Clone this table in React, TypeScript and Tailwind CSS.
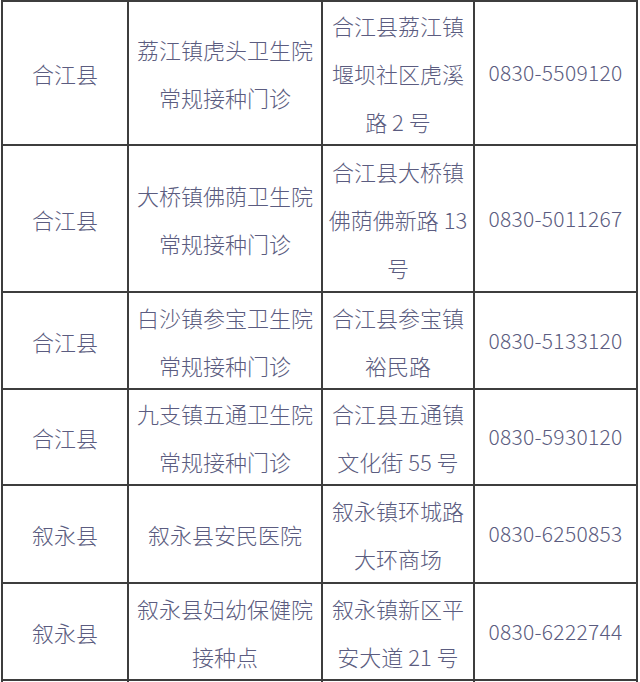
import React from "react";

type Row = { county: string; name: string[]; addr: string[]; phone: string };

const rows: Row[] = [
  { county: "合江县", name: ["荔江镇虎头卫生院", "常规接种门诊"], addr: ["合江县荔江镇", "堰坝社区虎溪", "路 2 号"], phone: "0830-5509120" },
  { county: "合江县", name: ["大桥镇佛荫卫生院", "常规接种门诊"], addr: ["合江县大桥镇", "佛荫佛新路 13", "号"], phone: "0830-5011267" },
  { county: "合江县", name: ["白沙镇参宝卫生院", "常规接种门诊"], addr: ["合江县参宝镇", "裕民路"], phone: "0830-5133120" },
  { county: "合江县", name: ["九支镇五通卫生院", "常规接种门诊"], addr: ["合江县五通镇", "文化街 55 号"], phone: "0830-5930120" },
  { county: "叙永县", name: ["叙永县安民医院"], addr: ["叙永镇环城路", "大环商场"], phone: "0830-6250853" },
  { county: "叙永县", name: ["叙永县妇幼保健院", "接种点"], addr: ["叙永镇新区平", "安大道 21 号"], phone: "0830-6222744" },
];

const font = { fontFamily: '"Noto Sans CJK SC", sans-serif' };

function Cell({ lines }: { lines: string[] }) {
  return (
    <div className="bg-white flex flex-col items-center justify-center text-[22px] font-light leading-[48px] text-[#5b5c80] whitespace-pre">
      {lines.map((l, i) => (
        <div key={i}>{l}</div>
      ))}
    </div>
  );
}

export default function App() {
  return (
    <div className="w-[640px] h-[682px] overflow-hidden bg-white" style={font}>
      <div className="ml-[1px] w-[637px] bg-[#3d3d3d] p-[2px] grid gap-[2px] grid-cols-[124px_192px_150px_161px] grid-rows-[142px_145px_95px_94px_96px_95px_95px]">
        {rows.map((r, i) => (
          <React.Fragment key={i}>
            <Cell lines={[r.county]} />
            <Cell lines={r.name} />
            <Cell lines={r.addr} />
            <div className="bg-white flex items-center justify-center text-[21px] font-light text-[#5b5c80] tracking-[0.3px]">
              {r.phone}
            </div>
          </React.Fragment>
        ))}
        <div className="bg-white" />
        <div className="bg-white" />
        <div className="bg-white" />
        <div className="bg-white" />
      </div>
    </div>
  );
}
